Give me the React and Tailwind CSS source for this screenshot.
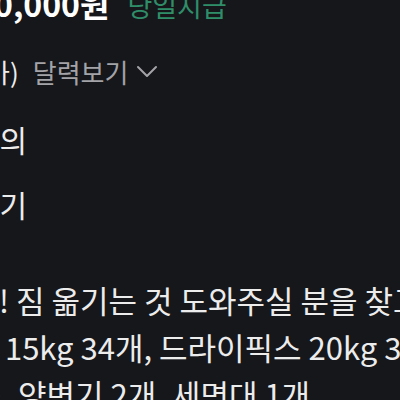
import React from "react";

const KR = "font-['Noto_Sans_CJK_KR','Noto_Sans',sans-serif]";

export default function App() {
  return (
    <div
      className={`w-[400px] h-[400px] overflow-hidden bg-[#16171b] text-[#ececec] ${KR}`}
    >
      {/* price row */}
      <div className="flex items-baseline whitespace-nowrap mt-[-17px] h-[40px] leading-[40px]">
        <span className="ml-[-6px] text-[32px] font-bold text-white">0,000원</span>
        <span className="ml-[18px] text-[27px] text-[#2f8e69]">당일지급</span>
      </div>

      {/* date row */}
      <div className="flex items-center whitespace-nowrap mt-[30px] h-[36px] text-[26px]">
        <span className="ml-[-14px]">가)</span>
        <span className="ml-[14px] text-[26px] text-[#a3a3a8]">달력보기</span>
        <svg
          className="ml-[8px]"
          width="22"
          height="14"
          viewBox="0 0 22 14"
          fill="none"
          stroke="#a3a3a8"
          strokeWidth="2"
          strokeLinecap="round"
          strokeLinejoin="round"
        >
          <path d="M2 3l9 9 9-9" />
        </svg>
      </div>

      {/* time row */}
      <div className="whitespace-nowrap mt-[32px] h-[36px] leading-[36px] text-[30px]">
        <span className="ml-[-28px]">협의</span>
      </div>

      {/* task row */}
      <div className="whitespace-nowrap mt-[29px] h-[36px] leading-[36px] text-[30px]">
        <span className="ml-[-28px]">르기</span>
      </div>

      {/* description */}
      <div className="mt-[54px] text-[31px] leading-[47px] whitespace-nowrap">
        <p className="ml-[-1px]">! 짐 옮기는 것 도와주실 분을 찾고 있어요</p>
        <p className="ml-[-2px]">&nbsp;15kg 34개, 드라이픽스 20kg 30개</p>
        <p className="ml-[-26px]">스, 양변기 2개, 세면대 1개</p>
      </div>
    </div>
  );
}
